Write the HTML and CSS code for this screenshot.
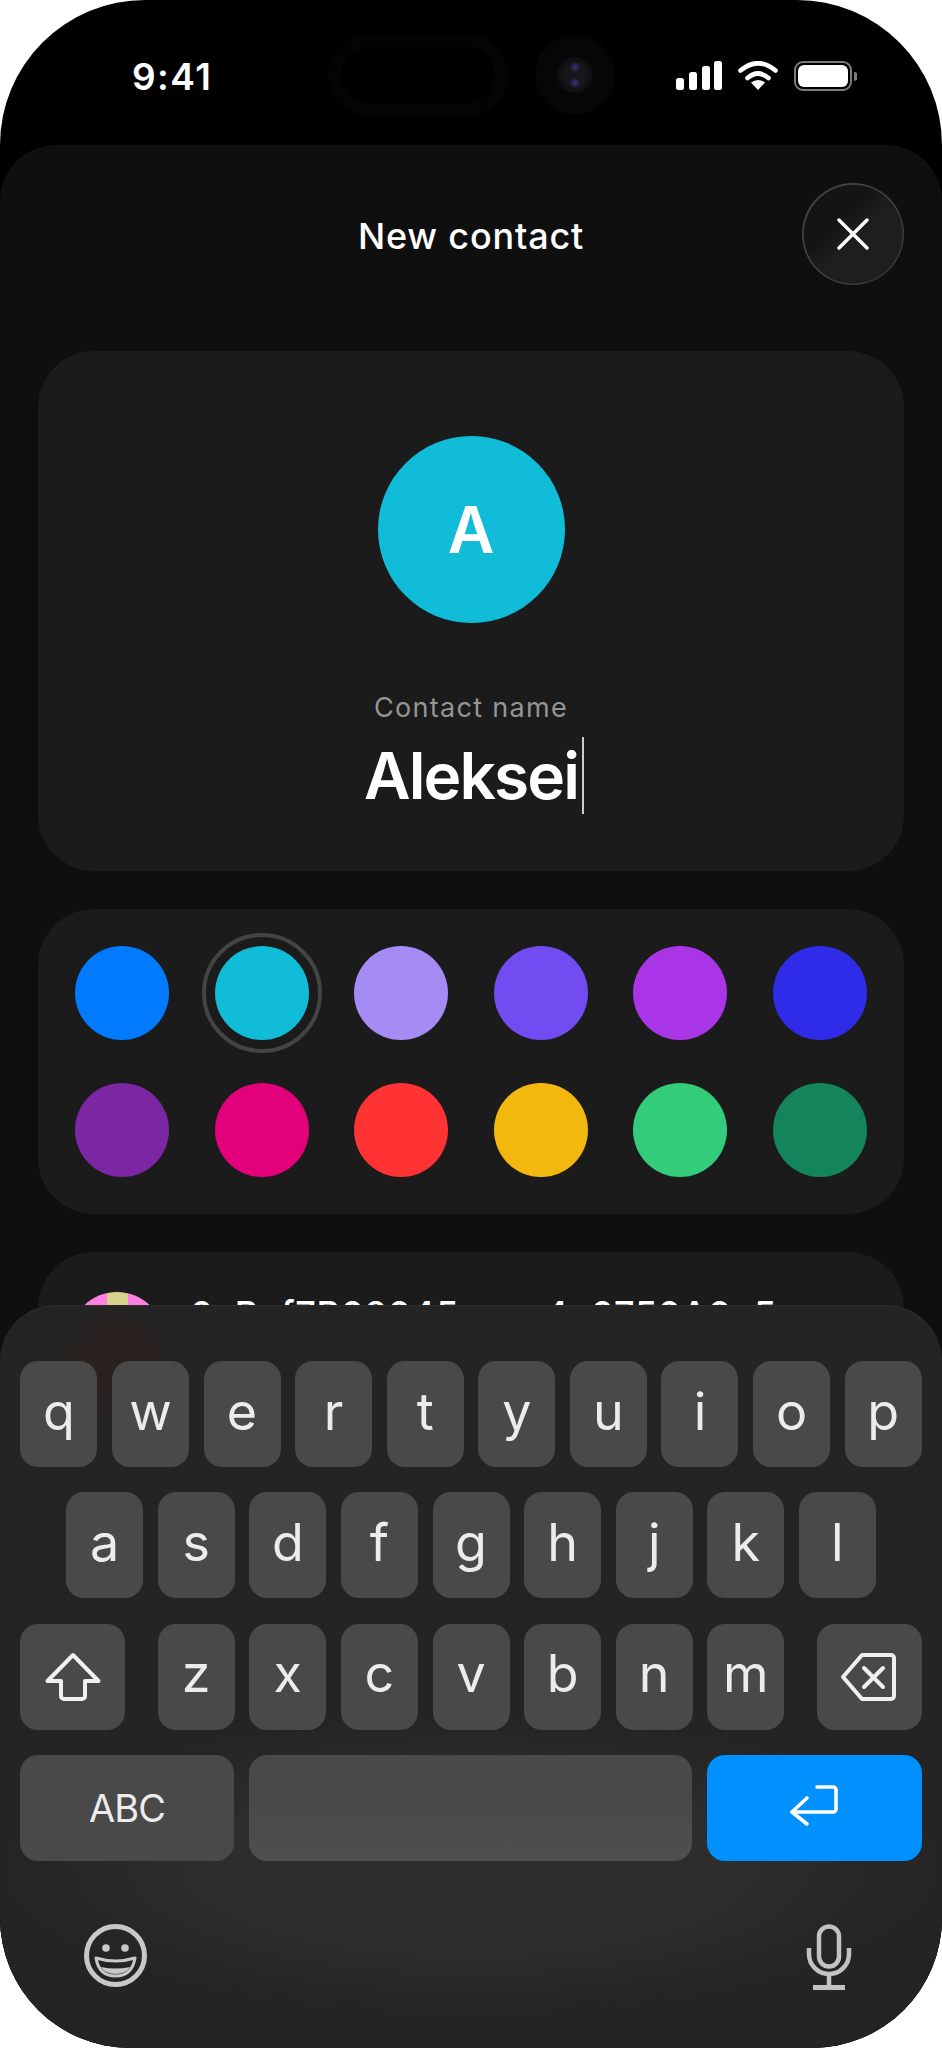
FILE: index.html
```html
<!DOCTYPE html>
<html lang="en">
<head>
  <meta charset="UTF-8">
  <meta name="viewport" content="width=device-width, initial-scale=1.0">
  <title>New contact</title>
  <link rel="stylesheet" href="styles.css">
</head>
<body>

<div class="phone">

  <!-- Status bar -->
  <div class="status-bar">
    <span class="time">9:41</span>
    <div class="island"></div>
    <div class="camera"><div class="lens"></div></div>
    <div class="status-icons">
      <svg width="46" height="29" viewBox="0 0 46 29" fill="#fff">
        <rect x="0" y="17" width="8" height="12" rx="2.5"/>
        <rect x="13" y="11" width="8" height="18" rx="2.5"/>
        <rect x="26" y="5" width="8" height="24" rx="2.5"/>
        <rect x="38" y="0" width="8" height="29" rx="2.5"/>
      </svg>
      <svg width="40" height="30" viewBox="0 0 40 30" fill="none" stroke="#fff" stroke-width="4.6" stroke-linecap="round">
        <path d="M2.5 9.5 Q20 -5 37.5 9.5"/>
        <path d="M9.5 17 Q20 8 30.5 17"/>
        <path d="M20 29 L13 21.5 Q20 16.5 27 21.5 Z" fill="#fff" stroke="none"/>
      </svg>
      <svg width="63" height="30" viewBox="0 0 63 30">
        <rect x="1" y="1" width="56" height="28" rx="8" fill="none" stroke="#7c7c7c" stroke-width="2"/>
        <rect x="4" y="4" width="50" height="22" rx="6" fill="#fff"/>
        <path d="M60 11 a4 4 0 0 1 0 9 Z" fill="#7c7c7c"/>
      </svg>
    </div>
  </div>

  <!-- Sheet -->
  <div class="sheet">
    <div class="sheet-header">
      <h1>New contact</h1>
      <button class="close-btn">
        <svg width="32" height="32" viewBox="0 0 32 32" fill="none" stroke="#fff" stroke-width="3.4" stroke-linecap="round">
          <path d="M2 2 L30 30 M30 2 L2 30"/>
        </svg>
      </button>
    </div>

    <div class="card name-card">
      <div class="avatar">A</div>
      <div class="name-label">Contact name</div>
      <div class="name-value"><span class="typed">Aleksei</span></div>
    </div>

    <div class="card color-card">
      <div class="swatch" style="background:#007aff"></div>
      <div class="swatch selected" style="background:#10bcd8"></div>
      <div class="swatch" style="background:#a48cf4"></div>
      <div class="swatch" style="background:#714cf0"></div>
      <div class="swatch" style="background:#a935e6"></div>
      <div class="swatch" style="background:#2e2ce8"></div>
      <div class="swatch" style="background:#7b27a3"></div>
      <div class="swatch" style="background:#e3007b"></div>
      <div class="swatch" style="background:#ff3333"></div>
      <div class="swatch" style="background:#f3b80d"></div>
      <div class="swatch" style="background:#33cc7a"></div>
      <div class="swatch" style="background:#14845a"></div>
    </div>

    <div class="card address-card">
      <div class="blockie"></div>
      <span class="address">0xBef7B02045aeca4c0750A0e5</span>
    </div>
  </div>

  <!-- Keyboard -->
  <div class="keyboard">
    <div class="avatar-glow"></div>

    <div class="key-row">
      <div class="key">q</div><div class="key">w</div><div class="key">e</div><div class="key">r</div><div class="key">t</div>
      <div class="key">y</div><div class="key">u</div><div class="key">i</div><div class="key">o</div><div class="key">p</div>
    </div>

    <div class="key-row">
      <div class="key">a</div><div class="key">s</div><div class="key">d</div><div class="key">f</div><div class="key">g</div>
      <div class="key">h</div><div class="key">j</div><div class="key">k</div><div class="key">l</div>
    </div>

    <div class="key-row spread">
      <div class="key wide">
        <svg width="60" height="52" viewBox="0 0 60 52" fill="none" stroke="#f0f0f0" stroke-width="4" stroke-linejoin="round">
          <path d="M30 4 L4.5 30 H18 V45 a3 3 0 0 0 3 3 H39 a3 3 0 0 0 3 -3 V30 H55.5 Z"/>
        </svg>
      </div>
      <div class="key-group">
        <div class="key">z</div><div class="key">x</div><div class="key">c</div><div class="key">v</div>
        <div class="key">b</div><div class="key">n</div><div class="key">m</div>
      </div>
      <div class="key wide">
        <svg width="60" height="52" viewBox="0 0 60 52" fill="none" stroke="#f0f0f0" stroke-width="4" stroke-linejoin="round" stroke-linecap="round">
          <path d="M22 4 H51 a3 3 0 0 1 3 3 V45 a3 3 0 0 1 -3 3 H22 L3 26 Z"/>
          <path d="M24 17 L43 36 M43 17 L24 36"/>
        </svg>
      </div>
    </div>

    <div class="key-row">
      <div class="key abc">ABC</div>
      <div class="key space"></div>
      <div class="key return">
        <svg width="60" height="52" viewBox="0 0 60 52" fill="none" stroke="#fff" stroke-width="3.6" stroke-linecap="round" stroke-linejoin="round">
          <path d="M32 5 H48 a3 3 0 0 1 3 3 V27 a3 3 0 0 1 -3 3 H7"/>
          <path d="M22 16 L7 30 L22 42"/>
        </svg>
      </div>
    </div>

    <div class="keyboard-footer">
      <svg width="63" height="63" viewBox="0 0 63 63" fill="none" stroke="#c8c8c8">
        <circle cx="31.5" cy="31.5" r="29" stroke-width="5"/>
        <circle cx="22" cy="24" r="3.8" fill="#c8c8c8" stroke="none"/>
        <circle cx="41" cy="24" r="3.8" fill="#c8c8c8" stroke="none"/>
        <path d="M12 34 Q31.5 40 51 34 Q48 52 31.5 52 Q15 52 12 34 Z" stroke-width="3" stroke-linejoin="round"/>
        <path d="M17 43 Q31.5 46 46 43 Q42 50 31.5 50 Q21 50 17 43 Z" fill="#c8c8c8" stroke="none"/>
      </svg>
      <svg width="46" height="66" viewBox="0 0 46 66" fill="none" stroke="#c2c2c2" stroke-width="4.5">
        <rect x="13" y="2.5" width="20" height="40" rx="10"/>
        <path d="M3 24 V30 a20 20 0 0 0 40 0 V24"/>
        <path d="M23 50 V62"/>
        <path d="M7 63.5 H39" stroke-width="5"/>
      </svg>
    </div>
  </div>

</div>

</body>
</html>
```

FILE: styles.css
```css
html, body {
  margin: 0;
  background: #fff;
  font-family: 'Inter', 'Liberation Sans', sans-serif;
}

.phone {
  position: relative;
  width: 942px;
  height: 2048px;
  display: flex;
  flex-direction: column;
  background: #000;
  border-radius: 145px 145px 130px 130px;
  overflow: hidden;
  color: #fff;
}

/* Status bar */
.status-bar {
  height: 145px;
  flex: none;
  display: flex;
  align-items: flex-start;
  padding-left: 132px;
  box-sizing: border-box;
}

.time {
  width: 81px;
  margin-top: 54px;
  font-size: 37px;
  font-weight: 600;
  letter-spacing: 1.4px;
  line-height: 45px;
  white-space: nowrap;
}

.island {
  width: 154px;
  height: 56px;
  margin: 47px 0 0 128px;
  border-radius: 28px;
  box-shadow: 0 0 0 13px #040404;
}

.camera {
  width: 80px;
  height: 80px;
  margin: 35px 0 0 40px;
  border-radius: 50%;
  background: radial-gradient(circle, #1c1c22 0, #101012 30%, #070707 32%, #040404 100%);
  display: flex;
  align-items: center;
  justify-content: center;
}

.lens {
  width: 24px;
  height: 26px;
  border-radius: 50%;
  background: radial-gradient(circle at 50% 20%, #3f2f86 0, transparent 22%),
              radial-gradient(circle at 50% 80%, #3f2f86 0, transparent 22%),
              #17171b;
}

.status-icons {
  display: flex;
  align-items: flex-start;
  gap: 16px;
  margin: 61px 0 0 61px;
}

/* Sheet */
.sheet {
  flex: 1;
  min-height: 0;
  background: #0f0f0f;
  border-radius: 56px 56px 0 0;
  padding: 38px 38px 0;
  display: flex;
  flex-direction: column;
  gap: 38px;
}

.sheet-header {
  display: grid;
  grid-template-columns: 102px 1fr 102px;
  align-items: center;
  margin-bottom: 28px;
}

.sheet-header h1 {
  grid-column: 2;
  margin: 3px 0 0;
  text-align: center;
  font-size: 36px;
  font-weight: 500;
  letter-spacing: 0.8px;
}

.close-btn {
  grid-column: 3;
  width: 102px;
  height: 102px;
  padding: 0;
  border: none;
  border-radius: 50%;
  background: linear-gradient(135deg, #141414 35%, #1e1e1e 52%);
  box-shadow: inset 0 0 0 1.5px rgba(255, 255, 255, 0.12),
              inset 1px 1px 0 1px rgba(255, 255, 255, 0.1);
  display: flex;
  align-items: center;
  justify-content: center;
}

.card {
  background: #1b1b1b;
  border-radius: 56px;
  box-sizing: border-box;
  flex: none;
}

.name-card {
  height: 520px;
  padding-top: 85px;
  display: flex;
  flex-direction: column;
  align-items: center;
}

.avatar {
  width: 187px;
  height: 187px;
  border-radius: 50%;
  background: #10bcd8;
  display: flex;
  align-items: center;
  justify-content: center;
  font-size: 64px;
  font-weight: 600;
}

.name-label {
  margin-top: 67px;
  font-size: 27px;
  line-height: 36px;
  letter-spacing: 1.3px;
  color: #959595;
}

.name-value {
  margin-top: 11px;
  font-size: 64px;
  font-weight: 600;
  letter-spacing: -1.9px;
  line-height: 78px;
}

.typed {
  position: relative;
}

.typed::after {
  content: "";
  position: absolute;
  right: -6px;
  top: 0;
  width: 2px;
  height: 77px;
  background: #ccc;
}

.color-card {
  padding: 37px;
  display: grid;
  grid-template-columns: repeat(6, 94px);
  justify-content: space-between;
  row-gap: 43px;
}

.swatch {
  width: 94px;
  height: 94px;
  border-radius: 50%;
}

.swatch.selected {
  outline: 4px solid #444;
  outline-offset: 9.5px;
}

.address-card {
  height: 200px;
  padding: 40px 32px;
  display: flex;
  align-items: flex-start;
  gap: 26px;
}

.blockie {
  width: 94px;
  height: 94px;
  flex: none;
  border-radius: 50%;
  background: linear-gradient(90deg, #ff80e0 0, #ff80e0 37px, #d9d28f 37px, #d9d28f 58px, #ff80e0 58px);
}

.address {
  margin-top: -3px;
  font-size: 36px;
  font-weight: 500;
  letter-spacing: 0.7px;
  line-height: 50px;
  white-space: nowrap;
}

/* Keyboard */
.keyboard {
  position: absolute;
  left: 0;
  right: 0;
  top: 1305px;
  bottom: 0;
  overflow: hidden;
  padding-top: 56px;
  display: flex;
  flex-direction: column;
  gap: 25.33px;
  background: radial-gradient(ellipse 470px 150px at 50% 560px, #2e2e2e 0, #2d2d2d 55%, #242424 100%), #242424;
  border-radius: 56px 56px 130px 130px;
  box-shadow: inset 0 1.5px 0 #2b2b2b;
}

.avatar-glow {
  position: absolute;
  left: 70px;
  top: 12px;
  width: 94px;
  height: 94px;
  border-radius: 50%;
  background: #2a2220;
  filter: blur(8px);
}

.key-row {
  position: relative;
  display: flex;
  justify-content: center;
  gap: 14.6px;
  padding: 0 20px;
}

.key-row.spread {
  justify-content: space-between;
  gap: 0;
}

.key-group {
  display: flex;
  gap: 14.6px;
}

.key {
  width: 77px;
  height: 106px;
  flex: none;
  box-sizing: border-box;
  padding-bottom: 5px;
  border-radius: 18px;
  background: #494949;
  color: #ececec;
  display: flex;
  align-items: center;
  justify-content: center;
  font-size: 52px;
  line-height: 1;
}

.key.wide {
  width: 105px;
  padding-bottom: 0;
}

.key.abc {
  width: 214px;
  padding-bottom: 0;
  font-size: 38px;
  letter-spacing: -1px;
}

.key.space {
  flex: 1;
  background: linear-gradient(180deg, #494949 40%, #4f4f4f 100%);
}

.key.return {
  width: 215px;
  padding-bottom: 0;
  background: #0091ff;
}

.keyboard-footer {
  position: relative;
  display: flex;
  justify-content: space-between;
  align-items: flex-start;
  padding: 38px 90px 0 84px;
}
```
